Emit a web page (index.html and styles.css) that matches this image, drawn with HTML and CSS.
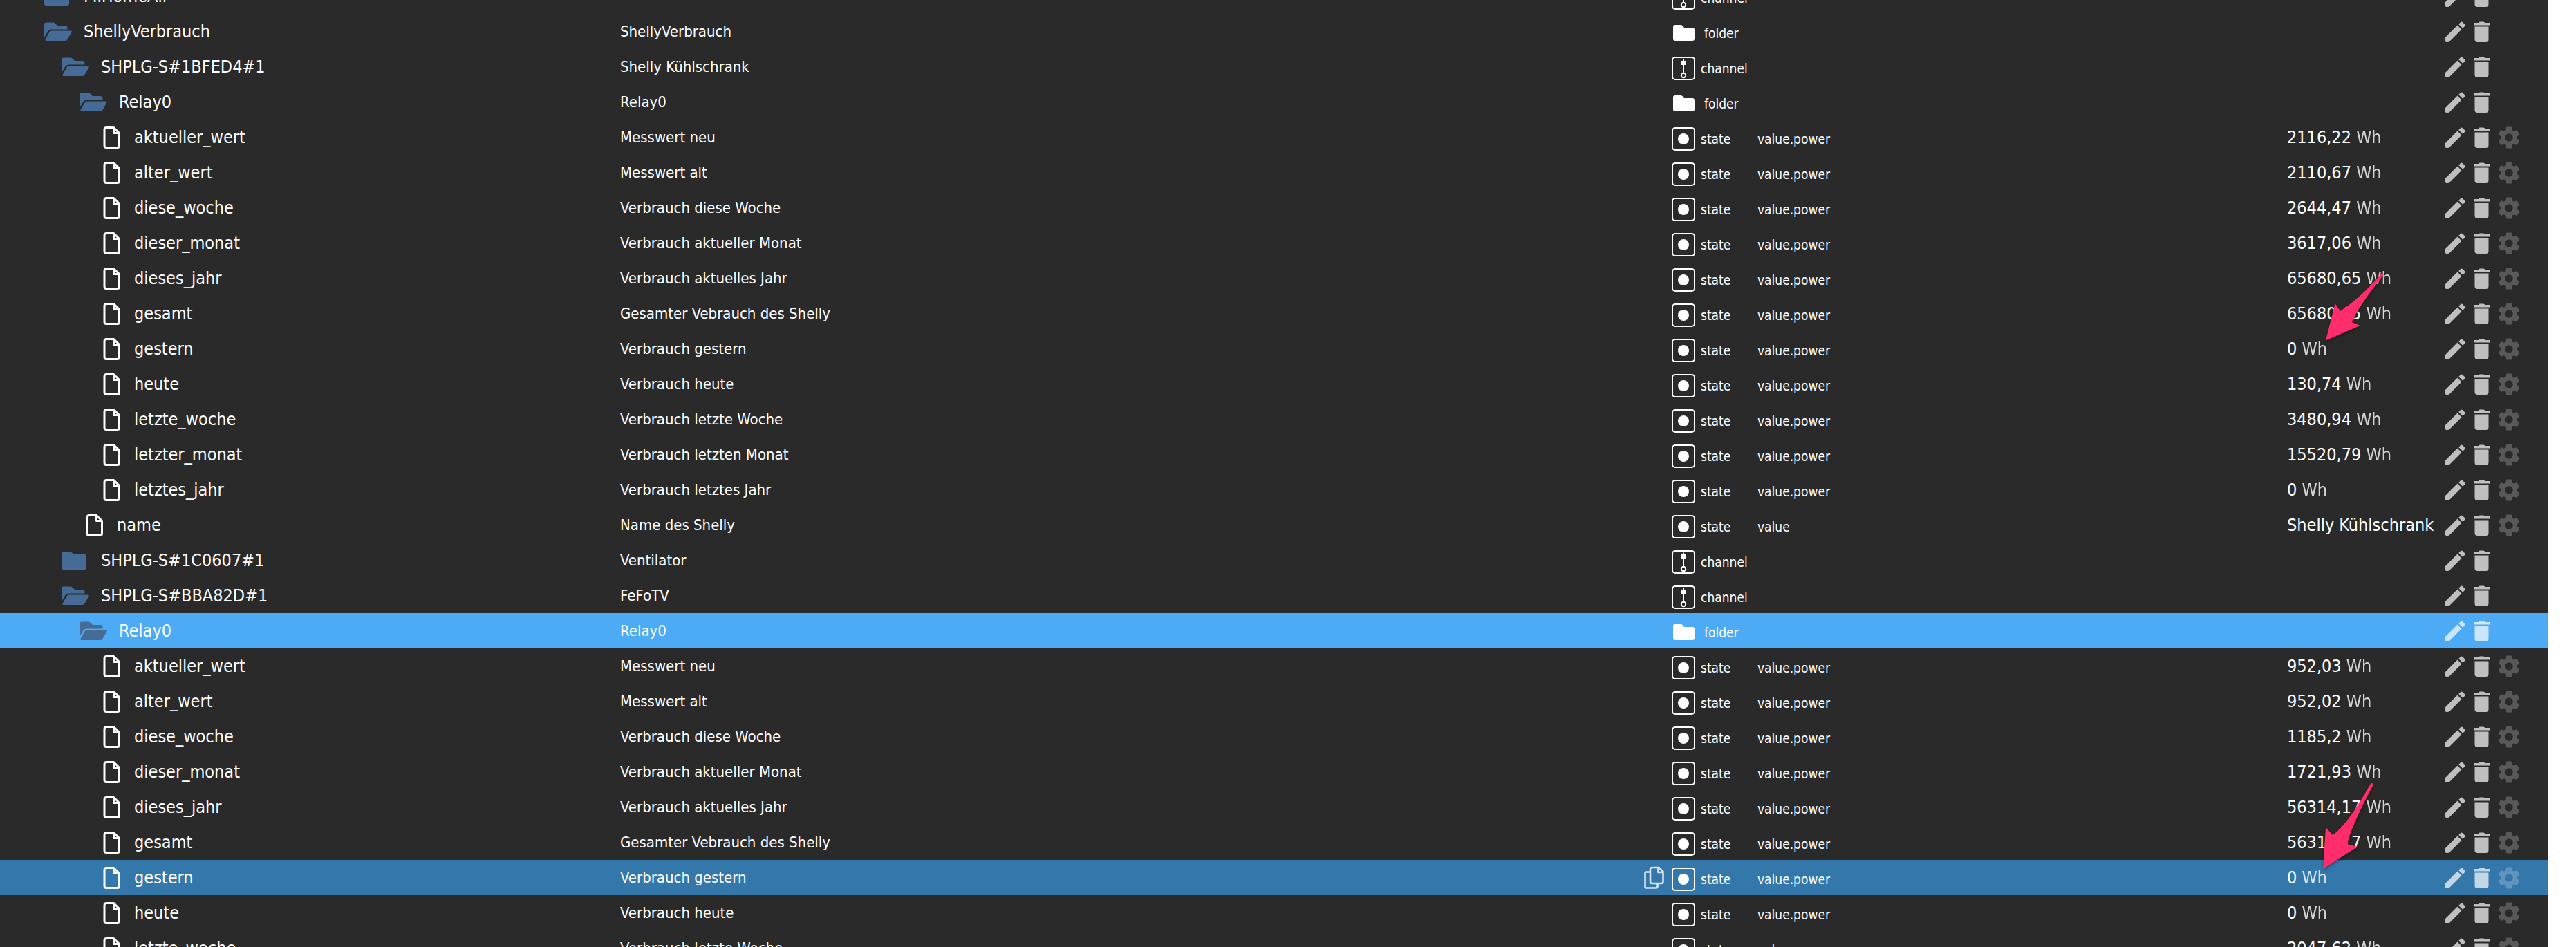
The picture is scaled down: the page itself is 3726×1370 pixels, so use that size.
FILE: index.html
```
<!DOCTYPE html>
<html lang="de">
<head>
<meta charset="utf-8">
<title>Objekte</title>
<link rel="stylesheet" href="styles.css">
<script src="tree.js" defer></script>
</head>
<body>
<svg class="defs" aria-hidden="true">
  <symbol id="closed" viewBox="0 0 40 28"><path d="M3 1H13L18 5H33Q36 5 36 8V24Q36 27 33 27H3Q0 27 0 24V4Q0 1 3 1Z"/></symbol>
  <symbol id="open" viewBox="0 0 40 28"><path d="M3 .5H13Q14.500 .5 15.500 1.500L18.500 4.500Q19.500 5 20.500 5H30Q33.500 5 33.500 8.500V10.500H10Q7 10.500 5.500 13L0 22V3.500Q0 .5 3 .5Z"/><path d="M10.500 12.500H38Q40.500 12.500 39.200 15L33.500 25Q32.500 27 30 27H3Q.5 27 1.800 24.500L7.500 14.500Q8.500 12.500 10.500 12.500Z"/></symbol>
  <symbol id="file" viewBox="0 0 40 34"><path d="M14 2.500H24.500L32.500 10.500V28.500Q32.500 31.500 30 31.500H14Q11 31.500 11 28.500V5.500Q11 2.500 14 2.500ZM24.500 2.500V10.500H32.500" fill="none" stroke="currentColor" stroke-width="3" stroke-linejoin="round"/></symbol>
  <symbol id="folder" viewBox="0 0 34 34"><path d="M5 5H13Q15 5 16 6.500L18 9H30Q33 9 33 12V25Q33 28 30 28H5Q2 28 2 25V8Q2 5 5 5Z"/></symbol>
  <symbol id="channel" viewBox="0 0 34 34"><rect x="1" y="1" width="32" height="32" rx="4" fill="none" stroke="currentColor" stroke-width="2"/><path d="M13 6H16V3.500H18V6H21V12H18V23H16V12H13Z"/><circle cx="17" cy="27" r="3.200" fill="none" stroke="currentColor" stroke-width="2"/></symbol>
  <symbol id="state" viewBox="0 0 34 34"><rect x="1" y="1" width="32" height="32" rx="4" fill="none" stroke="currentColor" stroke-width="2"/><circle cx="17" cy="17" r="8"/></symbol>
  <symbol id="copy" viewBox="0 0 30 34"><path d="M11.500 2H21.500L27.500 8V22.500Q27.500 25 25 25H11.500Q9 25 9 22.500V4.500Q9 2 11.500 2ZM20.500 2V9H27.500M9 8.500H3.500Q1.500 8.500 1.500 10.500V29.500Q1.500 31.500 3.500 31.500H17.500Q19.500 31.500 19.500 29.500V25" fill="none" stroke="currentColor" stroke-width="2.600" stroke-linejoin="round"/></symbol>
  <symbol id="pencil" viewBox="0 0 32 32"><path d="M19.500 6.500L25.500 12.500L8.500 29.500Q7 31 5 31H3.500Q1 30.500 1 28V26.500Q1 25 2.500 23.500ZM21.200 5L24 2.200Q25.500 1 27 2.200L29.800 5Q31.200 6.500 30 8L27.200 10.800Z"/></symbol>
  <symbol id="trash" viewBox="0 0 32 32"><path d="M4 3H11Q11 1.500 13 1.500H18Q20 1.500 20 3H27V6.500H4ZM5.500 8.500H25.500V27Q25.500 31 21.500 31H9.500Q5.500 31 5.500 27Z"/></symbol>
  <symbol id="gear" viewBox="1.700 1.700 20.600 20.600"><path d="M19.430 12.980c.04-.32.07-.64.07-.98s-.03-.66-.07-.98l2.110-1.650c.19-.15.24-.42.12-.64l-2-3.460c-.12-.22-.39-.3-.61-.22l-2.490 1c-.52-.4-1.080-.73-1.690-.98l-.38-2.650C14.460 2.180 14.250 2 14 2h-4c-.25 0-.46.18-.49.42l-.38 2.650c-.61.25-1.170.59-1.690.98l-2.490-1c-.23-.09-.49 0-.61.22l-2 3.460c-.13.22-.07.49.12.64l2.110 1.650c-.04.32-.07.65-.07.98s.03.66.07.98l-2.110 1.650c-.19.15-.24.42-.12.64l2 3.460c.12.22.39.3.61.22l2.490-1c.52.4 1.080.73 1.690.98l.38 2.650c.03.24.24.42.49.42h4c.25 0 .46-.18.49-.42l.38-2.650c.61-.25 1.170-.59 1.690-.98l2.490 1c.23.09.49 0 .61-.22l2-3.460c.12-.22.07-.49-.12-.64l-2.110-1.650zM12 15.700a3.700 3.700 0 1 1 0-7.400a3.700 3.700 0 0 1 0 7.400z"/></symbol>
  <symbol id="arrow-a" viewBox="0 0 95 110"><path d="M5 102.500L18.500 49L26 60Q55 41 85 6.500Q87 4.500 89 7Q49 58 43 76L55 81Z"/></symbol>
  <symbol id="arrow-b" viewBox="0 0 85 134"><path d="M6 129L10 69L20 80Q41 66 74.500 6.500Q77 3.500 79 7Q47 67 41 93L56 97Z"/></symbol>
</svg>
<main class="objects">
  <table class="tree" aria-label="Objekte">
    <colgroup><col class="c-id"><col class="c-name"><col class="c-copy"><col class="c-type"><col class="c-role"><col class="c-value"><col class="c-actions"></colgroup>
    <tbody id="rows"></tbody>
  </table>
</main>
</body>
</html>
```
FILE: tree.js
```
// level, tree icon, id, name, type, role, value, unit, options
const rows = [
  [1, "closed", "MiHomeAll", "", "channel"],
  [1, "open", "ShellyVerbrauch", "ShellyVerbrauch", "folder"],
  [2, "open", "SHPLG-S#1BFED4#1", "Shelly Kühlschrank", "channel"],
  [3, "open", "Relay0", "Relay0", "folder"],
  [4, "file", "aktueller_wert", "Messwert neu", "state", "value.power", "2116,22", "Wh"],
  [4, "file", "alter_wert", "Messwert alt", "state", "value.power", "2110,67", "Wh"],
  [4, "file", "diese_woche", "Verbrauch diese Woche", "state", "value.power", "2644,47", "Wh"],
  [4, "file", "dieser_monat", "Verbrauch aktueller Monat", "state", "value.power", "3617,06", "Wh"],
  [4, "file", "dieses_jahr", "Verbrauch aktuelles Jahr", "state", "value.power", "65680,65", "Wh"],
  [4, "file", "gesamt", "Gesamter Vebrauch des Shelly", "state", "value.power", "65680,65", "Wh"],
  [4, "file", "gestern", "Verbrauch gestern", "state", "value.power", "0", "Wh", { arrow: "arrow-a" }],
  [4, "file", "heute", "Verbrauch heute", "state", "value.power", "130,74", "Wh"],
  [4, "file", "letzte_woche", "Verbrauch letzte Woche", "state", "value.power", "3480,94", "Wh"],
  [4, "file", "letzter_monat", "Verbrauch letzten Monat", "state", "value.power", "15520,79", "Wh"],
  [4, "file", "letztes_jahr", "Verbrauch letztes Jahr", "state", "value.power", "0", "Wh"],
  [3, "file", "name", "Name des Shelly", "state", "value", "Shelly Kühlschrank", ""],
  [2, "closed", "SHPLG-S#1C0607#1", "Ventilator", "channel"],
  [2, "open", "SHPLG-S#BBA82D#1", "FeFoTV", "channel"],
  [3, "open", "Relay0", "Relay0", "folder", "", "", "", { state: "selected" }],
  [4, "file", "aktueller_wert", "Messwert neu", "state", "value.power", "952,03", "Wh"],
  [4, "file", "alter_wert", "Messwert alt", "state", "value.power", "952,02", "Wh"],
  [4, "file", "diese_woche", "Verbrauch diese Woche", "state", "value.power", "1185,2", "Wh"],
  [4, "file", "dieser_monat", "Verbrauch aktueller Monat", "state", "value.power", "1721,93", "Wh"],
  [4, "file", "dieses_jahr", "Verbrauch aktuelles Jahr", "state", "value.power", "56314,17", "Wh"],
  [4, "file", "gesamt", "Gesamter Vebrauch des Shelly", "state", "value.power", "56314,17", "Wh"],
  [4, "file", "gestern", "Verbrauch gestern", "state", "value.power", "0", "Wh", { state: "active", arrow: "arrow-b" }],
  [4, "file", "heute", "Verbrauch heute", "state", "value.power", "0", "Wh"],
  [4, "file", "letzte_woche", "Verbrauch letzte Woche", "state", "value.power", "2047,62", "Wh"],
];

const icon = (id, cls) => `<svg class="${cls}" aria-hidden="true"><use href="#${id}"/></svg>`;
const button = (id, label, cls = "") =>
  `<button type="button" class="action ${cls}" aria-label="${label}">${icon(id, "action-icon")}</button>`;

document.getElementById("rows").innerHTML = rows.map(
  ([level, tree, id, name, type, role = "", value = "", unit = "", opt = {}]) => `
  <tr class="row ${opt.state || ""}">
    <td><div class="node level-${level} ${tree}">${icon(tree, "tree-icon")}<span>${id}</span></div></td>
    <td class="name">${name}</td>
    <td>${opt.state === "active" ? `<button type="button" class="copy" aria-label="Kopieren">${icon("copy", "copy-icon")}</button>` : ""}</td>
    <td><div class="type ${type}">${icon(type, "type-icon")}<span>${type}</span></div></td>
    <td><div class="role">${role}</div></td>
    <td class="value">${value}${unit ? ` <span class="unit">${unit}</span>` : ""}${opt.arrow ? icon(opt.arrow, "arrow " + opt.arrow) : ""}</td>
    <td><div class="actions">${button("pencil", "Bearbeiten")}${button("trash", "Löschen")}${type === "state" ? button("gear", "Einstellungen", "dim") : ""}</div></td>
  </tr>`).join("");
```
FILE: styles.css
```
* { box-sizing: border-box; }

body {
  margin: 0;
  background: #fff;
  color: #fff;
  font: 25px/30px "DejaVu Sans Condensed", "Open Sans", sans-serif;
}

.defs { display: none; }

svg { display: block; fill: currentColor; }

.objects {
  height: 100vh;
  margin-right: 41px;
  overflow: hidden;
  background: #2a2a2a;
}

/* the list is scrolled part-way through its first row */
.tree {
  width: 100%;
  margin-top: -31px;
  border-collapse: collapse;
  table-layout: fixed;
}

.c-id { width: 897px; }
.c-copy { width: 40px; }
.c-type { width: 125px; }
.c-role { width: 766px; }
.c-value { width: 223px; }
.c-actions { width: 154px; }

td { height: 51px; padding: 0; white-space: nowrap; vertical-align: middle; }

.selected { background: #4dabf5; }
.active { background: #3477ab; }

.node { display: flex; align-items: center; gap: 17px; }
.node.file { gap: 14px; }
.level-1 { padding-left: 64px; }
.level-2 { padding-left: 89px; }
.level-3 { padding-left: 115px; }
.level-4 { padding-left: 140px; }

.tree-icon { width: 40px; height: 28px; color: #456b96; }
.file .tree-icon { height: 34px; color: #fff; }

.name { font-size: 22px; }

.type { display: flex; align-items: center; gap: 8px; padding-top: 4px; padding-left: 1px; font-size: 19px; }
.type.folder { gap: 13px; }
.type-icon { width: 34px; height: 34px; }
.role { padding-top: 4px; font-size: 19px; }

.value { position: relative; }
.unit { opacity: .8; }

button { padding: 0; border: 0; background: none; color: #fff; cursor: pointer; }

.actions { display: flex; gap: 7px; padding-left: 4px; }
.action { opacity: .7; }
.action.dim { opacity: .22; }
.action-icon { width: 32px; height: 32px; }

.copy { display: block; padding-left: 1px; opacity: .8; }
.copy-icon { width: 30px; height: 34px; }

/* callout arrows laid over the values */
.arrow { position: absolute; z-index: 1; color: #ff2d6c; filter: drop-shadow(0 2px 2px rgba(0, 0, 0, .4)); }
.arrow-a { left: 51px; top: -89px; width: 95px; height: 110px; }
.arrow-b { left: 46px; top: -116px; width: 85px; height: 134px; }
```
